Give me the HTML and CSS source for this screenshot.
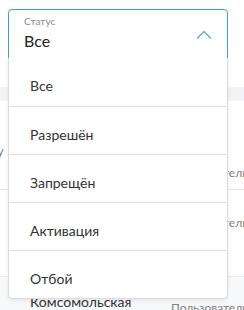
FILE: index.html
```html
<!DOCTYPE html>
<html lang="ru">
<head>
<meta charset="utf-8">
<link rel="stylesheet" href="styles.css">
</head>
<body>
<div class="page">
  <div class="select">
    <div class="field">
      <div class="field-text">
        <span class="label">Статус</span>
        <span class="value">Все</span>
      </div>
      <svg class="chevron" width="16" height="9" viewBox="0 0 16 9"><path d="M1 8.5 L8 1.5 L15 8.5" fill="none" stroke="#4aa6d6" stroke-width="1.2"/></svg>
    </div>
    <ul class="menu">
      <li class="item">Все</li>
      <li class="item">Разрешён</li>
      <li class="item">Запрещён</li>
      <li class="item">Активация</li>
      <li class="item">Отбой</li>
    </ul>
  </div>
  <div class="table">
    <div class="head"></div>
    <div class="row r1"><span class="c1">у</span><span class="c2">Пользователь</span></div>
    <div class="row r2"><span class="c1"></span><span class="c2">Пользователь</span></div>
    <div class="row r3"><span class="c1">Комсомольская</span><span class="c2">Пользователь</span></div>
  </div>
</div>
</body>
</html>
```
FILE: styles.css
```css
* { box-sizing: border-box; }
html, body { margin: 0; padding: 0; background: #fff; }
body { font-family: Lato, "Open Sans", sans-serif; color: #333; width: 244px; height: 310px; overflow: hidden; }
.page { position: relative; padding-top: 9px; }
.select { position: relative; margin-left: 8px; width: 220px; z-index: 2; }
.field {
  height: 50px;
  border: 1px solid #3f9fd2;
  border-radius: 4px 4px 0 0;
  background: #fff;
  display: flex;
  align-items: center;
  justify-content: space-between;
  padding: 0 15px 0 15px;
}
.field-text { display: flex; flex-direction: column; margin-top: -3px; }
.label { font-size: 10px; color: #8a8a8a; line-height: 12px; }
.value { font-size: 16px; color: #222; line-height: 20px; margin-top: 4px; }
.chevron { margin-top: 1px; }
.menu {
  position: absolute;
  left: 0; top: 49px; width: 220px;
  margin: 0; padding: 0; list-style: none;
  background: #fff;
  border: 1px solid #dcdcdc;
  border-top: none;
  border-radius: 0 0 5px 5px;
  box-shadow: 0 2px 4px rgba(0,0,0,0.08);
}
.item {
  height: 48px;
  padding: 8px 0 0 21px;
  line-height: 40px;
  font-size: 14px;
  color: #333;
  border-top: 1px solid #e2e2e2;
}
.item:first-child { border-top: none; }
.table { margin-top: 28px; }
.head { height: 14px; background: #f3f4f8; }
.row {
  display: grid;
  grid-template-columns: 171px 73px;
  font-size: 12px;
  color: #808080;
  white-space: nowrap;
}
.row .c2 { overflow: hidden; }
.r1 { height: 89px; border-bottom: 1px solid #e6e6e6; }
.r1 .c1 { margin-left: -3px; padding-top: 42px; font-size: 13px; }
.r1 .c2 { padding-top: 64px; }
.r2 { height: 87px; border-bottom: 1px solid #eee; }
.r2 .c2 { padding-top: 25px; }
.r3 { height: 40px; background: #f8f9fb; }
.r3 .c1 { font-size: 14px; color: #333; padding: 16px 0 0 30px; }
.r3 .c2 { padding-top: 23px; }
```
